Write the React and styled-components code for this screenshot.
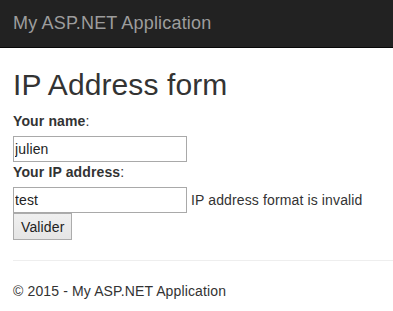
import React from 'react';
import styled, { createGlobalStyle } from 'styled-components';

const GlobalStyle = createGlobalStyle`
  html, body {
    margin: 0;
    padding: 0;
    background: #fff;
  }
  body {
    font-family: "Liberation Sans", Arial, sans-serif;
    font-size: 14px;
    line-height: 20px;
    letter-spacing: 0.13px;
    color: #333;
  }
`;

const Navbar = styled.div`
  height: 47px;
  background-color: #222;
  border-bottom: 1px solid #080808;
`;

const Brand = styled.span`
  display: block;
  padding-left: 13px;
  font-size: 18px;
  line-height: 47px;
  letter-spacing: 0.18px;
  color: #9d9d9d;
`;

const Container = styled.div`
  padding: 0 0 0 13px;
`;

const Title = styled.h2`
  margin: 20px 0 10px;
  font-size: 30px;
  font-weight: 500;
  line-height: 33px;
  letter-spacing: 0.1px;
  color: #333;
`;

const Label = styled.div`
  height: 20px;
  margin-bottom: 5px;

  b {
    font-weight: bold;
  }
`;

const Row = styled.div`
  display: flex;
  align-items: center;
  gap: 4px;
`;

const Input = styled.input`
  box-sizing: border-box;
  width: 174px;
  height: 26px;
  margin: 0;
  padding: 1px 1px;
  border: 1px solid #a9a9a9;
  font-family: "Liberation Sans", Arial, sans-serif;
  font-size: 14px;
  letter-spacing: 0.13px;
  color: #222;
  background: #fff;
  outline: none;
`;

const Error = styled.span`
  color: #333;
  line-height: 20px;
`;

const Button = styled.button`
  box-sizing: border-box;
  height: 27px;
  margin: 0;
  padding: 0 7px;
  border: 1px solid #acacac;
  background: linear-gradient(#f0f0f0, #e5e5e5);
  font-family: "Liberation Sans", Arial, sans-serif;
  font-size: 14px;
  letter-spacing: 0.13px;
  color: #222;
`;

const Rule = styled.hr`
  margin: 20px 0;
  border: 0;
  border-top: 1px solid #eee;
  height: 0;
`;

const Footer = styled.p`
  margin: 0;
  line-height: 20px;
`;

export default function App() {
  return (
    <>
      <GlobalStyle />
      <Navbar>
        <Brand>My ASP.NET Application</Brand>
      </Navbar>
      <Container>
        <Title>IP Address form</Title>
        <form onSubmit={(e) => e.preventDefault()}>
          <Label>
            <b>Your name</b>:
          </Label>
          <Row>
            <Input defaultValue="julien" />
          </Row>
          <Label>
            <b>Your IP address</b>:
          </Label>
          <Row>
            <Input defaultValue="test" />
            <Error>IP address format is invalid</Error>
          </Row>
          <Button type="submit">Valider</Button>
        </form>
        <Rule />
        <Footer>© 2015 - My ASP.NET Application</Footer>
      </Container>
    </>
  );
}
